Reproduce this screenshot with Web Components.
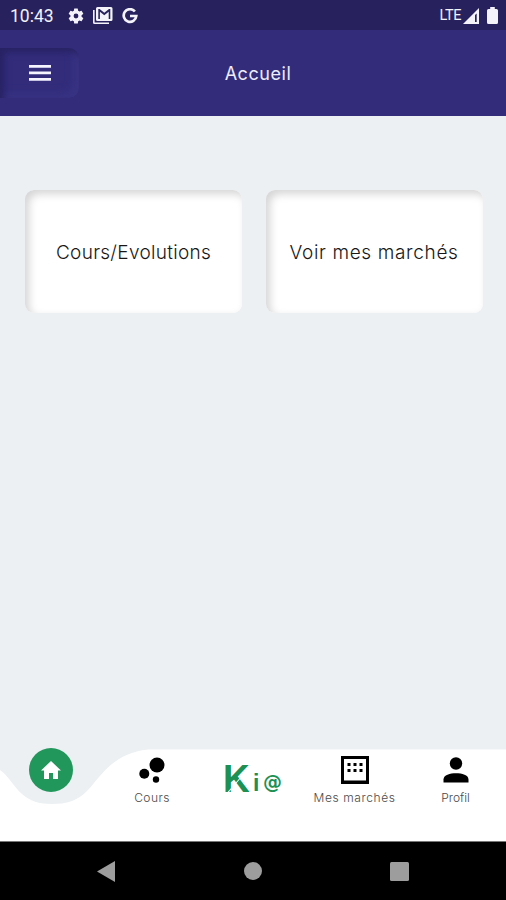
<!DOCTYPE html>
<html lang="fr">
<head>
<meta charset="utf-8">
<title>Accueil</title>
<style>
html,body{margin:0;height:100%}
body{font-family:Inter,"Noto Sans",sans-serif;background:#ecf0f3;overflow:hidden}
</style>
</head>
<body>
<kia-app></kia-app>
<script>
function define(name, markup) {
  const template = document.createElement('template');
  template.innerHTML = markup;
  customElements.define(name, class extends HTMLElement {
    constructor() {
      super();
      this.attachShadow({mode: 'open'}).append(template.content.cloneNode(true));
    }
  });
}

define('status-bar', `
<style>
:host{display:flex;align-items:center;height:30px;box-sizing:border-box;padding:1px 8px 0 10px;background:#27225d;color:#f4f3fa;font-family:Roboto,sans-serif}
.time{font-size:17.5px;width:57px;letter-spacing:0;font-weight:400;white-space:nowrap}
svg{display:block;fill:currentColor;flex:none}
.lte{margin-left:auto;font-size:14.5px;letter-spacing:-.4px;margin-right:2px}
</style>
<span class="time">10:43</span>
<svg width="18" height="18" viewBox="0 0 24 24"><path fill-rule="evenodd" d="M19.4 13a7.500 7.500 0 0 0 0-2l2.100-1.600a.5.5 0 0 0 .1-.7l-2-3.400a.5.5 0 0 0-.6-.2l-2.500 1a7 7 0 0 0-1.700-1L14.400 2.400A.5.5 0 0 0 14 2h-4a.5.5 0 0 0-.5.4L9.200 5.100a7 7 0 0 0-1.700 1L5 5.100a.5.5 0 0 0-.6.2l-2 3.400a.5.5 0 0 0 .1.7L4.600 11a7.500 7.500 0 0 0 0 2l-2.100 1.600a.5.5 0 0 0-.1.7l2 3.400a.5.5 0 0 0 .6.2l2.500-1a7 7 0 0 0 1.700 1l.3 2.700a.5.5 0 0 0 .5.4h4a.5.5 0 0 0 .5-.4l.3-2.700a7 7 0 0 0 1.700-1l2.500 1a.5.5 0 0 0 .6-.2l2-3.400a.5.5 0 0 0-.1-.7zM12 15.200a3.200 3.200 0 1 1 0-6.400 3.200 3.200 0 0 1 0 6.400z"/></svg>
<svg width="20" height="17" viewBox="0 0 20 17" style="margin-left:8px"><path d="M0 3h1.600v12.400H16V17H1.500Q0 17 0 15.500z"/><path fill-rule="evenodd" d="M4.500 0h13.500Q19.500 0 19.500 1.500v11Q19.500 14 18 14H4.500Q3 14 3 12.500v-11Q3 0 4.500 0zM5.300 2v10h1.600V4.800l4.400 3.500 4.400-3.500V12h1.600V2h-1.300l-4.700 3.800L6.600 2z"/></svg>
<svg width="16" height="16" viewBox="0 0 16 16" style="margin-left:9px"><path fill="none" stroke="currentColor" stroke-width="2.700" d="M12.900 3.500A6.300 6.300 0 1 0 14.300 8H8"/></svg>
<span class="lte">LTE</span>
<svg width="17" height="16" viewBox="0 0 17 16"><path fill-rule="evenodd" d="M0 16 16 0v16zM12 7v7h1.700V5.500z"/></svg>
<svg width="11" height="17" viewBox="0 0 11 17" style="margin-left:7px"><path d="M3.200 0h4.600v2H9.500q1.500 0 1.500 1.500V15.500Q11 17 9.500 17h-8Q0 17 0 15.500V3.500Q0 2 1.500 2h1.700z"/></svg>
`);

define('menu-button', `
<style>
:host{display:block;width:79px;height:50px}
button{display:flex;align-items:center;width:100%;height:100%;padding:0 0 0 29px;border:0;border-radius:0 10px 10px 0;background:#322c7b;box-shadow:inset 4px 4px 7px #272262,inset -5px -4px 8px #3b3586}
svg{display:block}
</style>
<button aria-label="Menu"><svg width="22" height="16" viewBox="0 0 22 16" fill="#f5f4ff"><path d="M0 0h22v2.800H0zM0 6.500h22v2.800H0zM0 13h22v2.800H0z"/></svg></button>
`);

define('app-header', `
<style>
:host{display:grid;grid-template-columns:79px 1fr 79px;align-items:center;height:86px;box-sizing:border-box;background:#322c7b;color:#eeedf8}
h1{margin:0;text-align:center;font-size:18px;line-height:24px;font-weight:400;letter-spacing:.55px;padding:2px 0 0 10px}
</style>
<menu-button></menu-button><h1><slot></slot></h1>
`);

define('action-card', `
<style>
:host{display:flex;justify-content:center;align-items:center;height:123px;padding-top:1px;box-sizing:border-box;border-radius:9px;background:#fff;box-shadow:inset 4px 4px 8px #d5d5d5,inset -3px -3px 6px #fff;color:#171717;font-size:19px;font-weight:300;white-space:nowrap}
</style>
<slot></slot>
`);

define('nav-item', `
<style>
:host{display:flex;flex-direction:column;align-items:center;color:#4a4a4a;font-size:12px;line-height:15px;font-weight:300;white-space:nowrap}
.icon{height:28px;display:grid;place-items:center;margin-bottom:6px}
</style>
<span class="icon"><slot name="icon"></slot></span><span><slot></slot></span>
`);

define('kia-logo', `
<style>
:host{display:grid;grid-template-columns:29px 10px 20px;width:60px;height:34px;color:#1c9154}
span{display:block;line-height:34px;transform-origin:left center}
.k{position:relative;font:700 39px/34px "Liberation Sans",sans-serif;transform:scaleX(.95)}
.k::after{content:"";position:absolute;left:2px;top:23px;width:19px;height:1.300px;background:#fff;transform:rotate(-48deg)}
.i{font:700 23px/34px "Liberation Sans",sans-serif;padding:4px 0 0 1px}
.at{font:700 19px/34px "DejaVu Sans",sans-serif;padding:3px 0 0 1px}
</style>
<span class="k">K</span><span class="i">i</span><span class="at">@</span>
`);

define('home-button', `
<style>
:host{display:grid;place-items:center;width:44px;height:44px;border-radius:50%;background:#21975c}
svg{display:block}
</style>
<svg width="20" height="18" viewBox="0 0 20 18" fill="#fff"><path d="M10 0 20 9.500h-3V18h-5v-6H8v6H3V9.500H0z"/></svg>
`);

define('bottom-nav', `
<style>
:host{display:grid;grid-template-columns:102px 100px 103px 99px 103px;grid-template-rows:94px;height:94px}
.shape{grid-area:1/1/2/6;display:block}
home-button{grid-area:1/1;justify-self:center}
nav-item,kia-logo{grid-row:1;padding-top:8px}
kia-logo{grid-column:3;padding:14px 0 0 21px}
svg{display:block}
</style>
<svg class="shape" width="506" height="94" viewBox="0 0 506 94"><path fill="#fff" d="M0 22C8 27 13 38 22 46C30 53 39 56 52 56C67 56 77 53 87 43C100 30 112 5 148 1.500H506V94H0z"/></svg>
<home-button></home-button>
<nav-item style="grid-column:2;letter-spacing:.45px"><svg slot="icon" width="26" height="26" viewBox="0 0 26 26"><circle cx="18" cy="8" r="7.500"/><circle cx="5.300" cy="16.800" r="5"/><circle cx="17" cy="22.500" r="3.200"/></svg>Cours</nav-item>
<kia-logo></kia-logo>
<nav-item style="grid-column:4;letter-spacing:.6px"><svg slot="icon" width="28" height="28" viewBox="0 0 28 28"><path fill-rule="evenodd" d="M0 0h28v28H0zM3 3v21.500h22V3z"/><path d="M6.500 7h3v3h-3zm6 0h3v3h-3zm6 0h3v3h-3zm-12 6h3v3h-3zm6 0h3v3h-3zm6 0h3v3h-3z"/></svg>Mes marchés</nav-item>
<nav-item style="grid-column:5"><svg slot="icon" width="26" height="26" viewBox="0 0 26 26"><circle cx="13" cy="6.500" r="6.200"/><path d="M.5 25.500v-3C.5 18 7 16.300 13 16.300S25.500 18 25.500 22.500v3z"/></svg>Profil</nav-item>
`);

define('system-nav', `
<style>
:host{display:grid;grid-template-columns:146px 1fr 146px;place-items:center;height:59px;margin-top:-1px;box-sizing:border-box;background:#000;border-top:1px solid #777}
svg{display:block;fill:#9d9d9d}
</style>
<svg width="18" height="21" viewBox="0 0 18 21" style="margin-left:65px"><path d="M18 0v21L0 10.500z"/></svg>
<svg width="18" height="18" viewBox="0 0 18 18"><circle cx="9" cy="9" r="9"/></svg>
<svg width="19" height="19" viewBox="0 0 19 19" style="margin-right:68px"><rect width="19" height="19" rx="1.500"/></svg>
`);

define('kia-app', `
<style>
:host{display:flex;flex-direction:column;width:506px;height:900px;background:#ecf0f3}
main{flex:1;display:grid;grid-template-columns:217px 217px;column-gap:23.500px;align-content:start;padding:74px 0 0 25px}
</style>
<status-bar></status-bar>
<app-header>Accueil</app-header>
<main>
<action-card style="letter-spacing:.3px">Cours/Evolutions</action-card>
<action-card style="letter-spacing:.65px">Voir mes marchés</action-card>
</main>
<bottom-nav></bottom-nav>
<system-nav></system-nav>
`);
</script>
</body>
</html>
